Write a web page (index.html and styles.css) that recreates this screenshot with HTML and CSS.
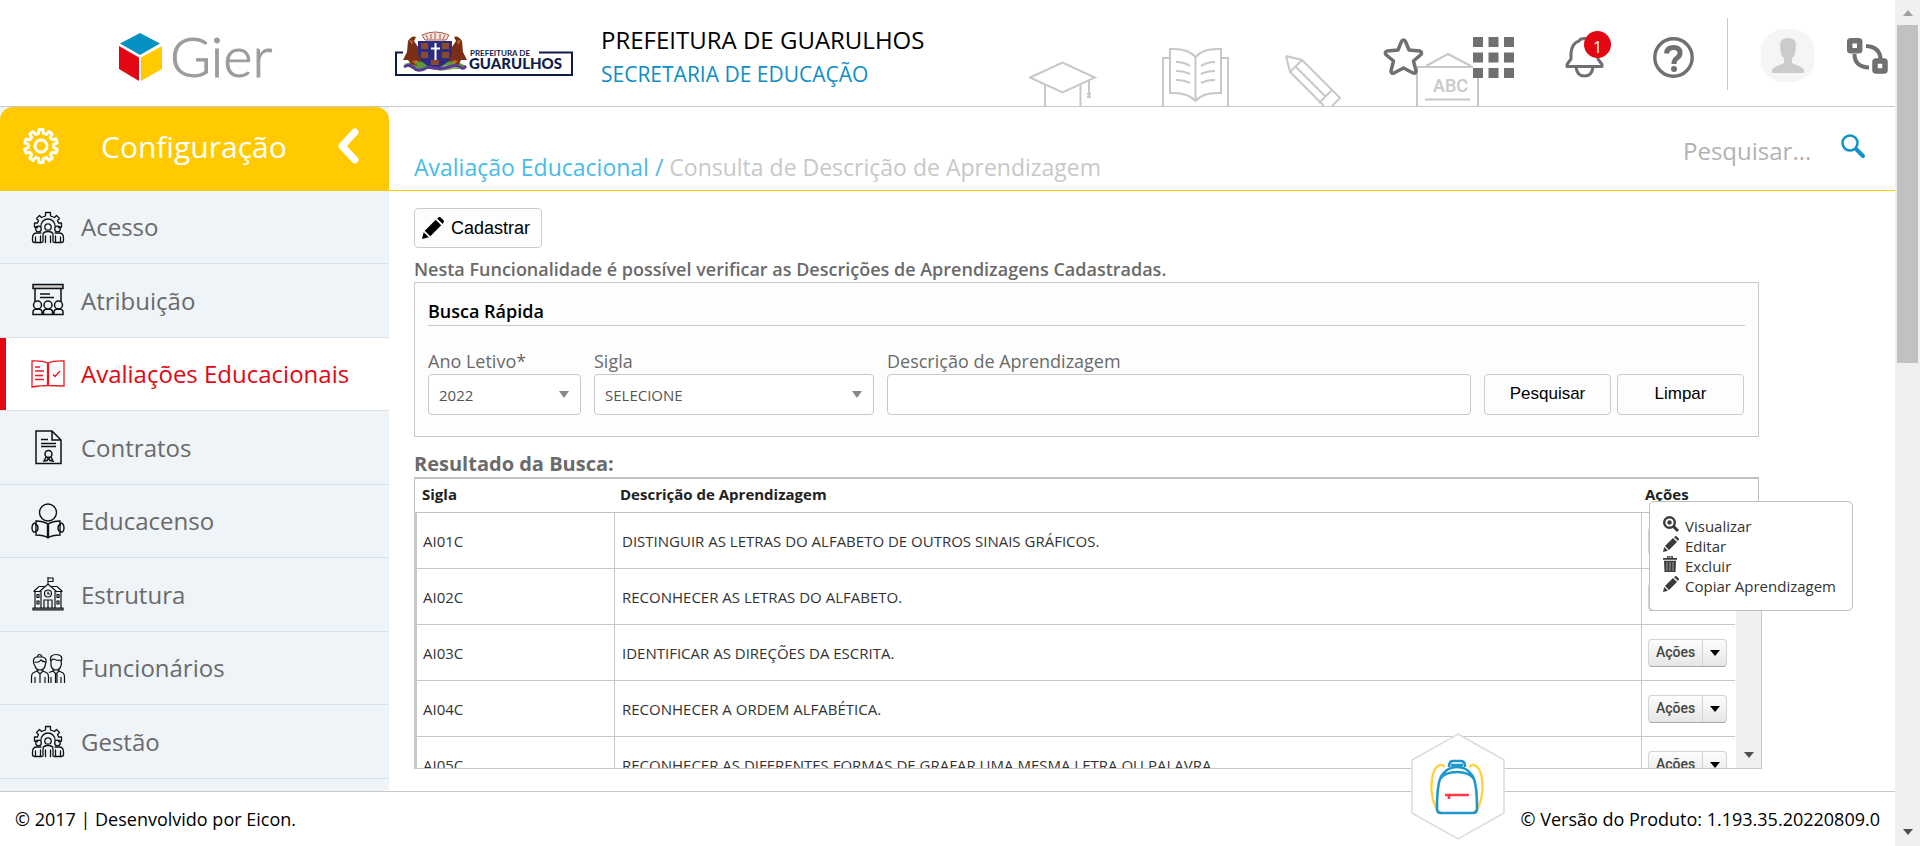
FILE: index.html
```html
<!DOCTYPE html>
<html lang="pt-BR">
<head>
<meta charset="utf-8">
<title>Gier - Consulta de Descrição de Aprendizagem</title>
<link rel="stylesheet" href="styles.css">
</head>
<body>
<svg class="defs" aria-hidden="true">
  <defs>
    <path id="tooth" d="M-3.9-11.9L-2.4-12.6-2-16.4H2L2.4-12.6 3.9-11.9"/>
    <g id="people" fill="none" stroke="currentColor" stroke-width="1.3" stroke-linejoin="round" stroke-linecap="round">
      <path d="M7.500 18.500L4.500 18V14H7.500L8.500 11.500 6.500 9.500 9.500 6.500 11.500 8.500 15.500 7V3.500H20.500V7L24.500 8.500 26.500 6.500 29.500 9.500 27.500 11.500 28.500 14H31.500V18L28.500 18.500"/>
      <path d="M11 17A7 7 0 0 1 25 17"/>
      <circle cx="18" cy="18" r="3.200"/><circle cx="8.500" cy="20" r="2.800"/><circle cx="27.500" cy="20" r="2.800"/>
      <path d="M13 33V26Q13 22.500 18 22.500T23 26V33M15.500 33.500V27M20.500 33.500V27"/>
      <path d="M11 24H7Q2.500 24 2.500 29V31.500Q2.500 33.500 5 33.500H12M5.500 33V28M10.500 33V27M25 24H29Q33.500 24 33.500 29V31.500Q33.500 33.500 31 33.500H24M30.500 33V28M25.500 33V27"/>
    </g>
    <g id="pencil"><path d="M0 16L1.200 11 5 14.800ZM2 10L10 2 14 6 6 14ZM11 1L12.200.2Q13-.3 13.800.5L15.500 2.200Q16.300 3 15.800 3.800L15 5Z"/></g>
  </defs>
</svg>
<div class="window">
  <div class="page">
    <header class="topbar">
      <svg class="scenery" viewBox="1029 46 451 60" fill="none" stroke="#c8c8c8" stroke-width="2" aria-hidden="true">
        <path d="M1030 77.500L1062.500 62.500 1095 77.500 1062.500 92.500ZM1045 85V106M1080.500 85V106M1089 80V98M1087 94H1091M1087 97H1091"/>
        <path d="M1170 58H1163V106M1221 58H1228V106M1170 49V93Q1188 92 1195.500 101 1203 92 1221 93V49Q1203 48 1195.500 57 1188 48 1170 49ZM1195.500 57V101"/>
        <path d="M1176 62Q1184 62 1190 66M1176 71Q1184 71 1190 74M1176 80Q1184 80 1190 83M1215 62Q1207 62 1201 66M1215 71Q1207 71 1201 74M1215 80Q1207 80 1201 83"/>
        <path d="M1286 56L1302 60 1340 98 1332 106M1286 56L1290 72 1324 106M1302 60L1290 72M1296 67L1325 96M1332 90L1319 103"/>
        <path d="M1417 67H1479M1426 66L1448 54 1471 66M1417 67V106M1478 67V106M1425 99.500H1470"/>
        <text class="scenery-text" x="1433" y="92" stroke="none" fill="#c8c8c8">ABC</text>
      </svg>
      <a class="brand" href="#" aria-label="Gier">
        <svg width="150" height="56" viewBox="119 29 150 56">
          <path fill="#0691c5" d="M140 33L160 43.500 140 55 120 43.500Z"/><path fill="#e30613" d="M119 46L139 57.500V81L119 69Z"/><path fill="#ffcb00" d="M162 46L141 57.500V81L162 69Z"/>
          <text class="brand-text" x="170" y="77">Gier</text>
        </svg>
      </a>
      <svg class="city" width="178" height="60" viewBox="395 27 178 60" role="img" aria-label="Prefeitura de Guarulhos">
        <path fill="none" stroke="#101c48" stroke-width="2" d="M403 52.500H396V75H572V52.500H539"/>
        <path fill="#5a9a3c" d="M404 64Q418 59 432 61 450 57 466 66L458 69H412Z"/>
        <path fill="#8fb56a" d="M425 66Q440 62 462 68L440 71Z"/>
        <path fill="#7a2e16" d="M408 41Q412 35 416 37L414 41 420 50 423 62 415 61 417 66 411 64 408 60 403 60 407 52ZM462 41Q458 35 454 37L456 41 450 50 447 62 455 61 453 66 459 64 461 60 467 60 463 52Z"/>
        <path fill="#c06a2a" d="M409 40L413 41 412 45ZM461 40L457 41 458 45ZM412 61L417 60 416 65ZM458 61L453 60 454 65Z"/>
        <path fill="#2d2c7e" d="M418 41H452V52Q451 64 435 69 419 64 418 52Z"/>
        <path fill="#8c4a2c" d="M421 43H428V49H421ZM442 43H449V49H442ZM421 52H428V58H421ZM442 52H449V58H442ZM431 60H439V65H431Z"/>
        <path stroke="#fff" stroke-width="2" d="M435.500 43V60M431 48.500H440"/>
        <path fill="#f5e4dc" stroke="#a9584a" d="M422 35Q435 29 449 35L446 40H425ZM426 35L428 39M431 34V39M435 33V39M440 34V39M445 35L443 39"/>
        <path fill="none" stroke="#5b3a94" stroke-width="3" d="M404 67Q410 63 414 68T428 67Q441 70 449 67T460 67 466 66"/>
        <text class="city-small" x="470" y="56">PREFEITURA DE</text>
        <text class="city-big" x="469" y="69">GUARULHOS</text>
      </svg>
      <div class="org">
        <div class="org-name">PREFEITURA DE GUARULHOS</div>
        <div class="org-dept">SECRETARIA DE EDUCAÇÃO</div>
      </div>
      <nav class="tools" aria-label="Atalhos">
        <button class="tool" aria-label="Favoritos"><svg viewBox="0 0 41 41"><path fill="#fff" stroke="#707070" stroke-width="3.500" stroke-linejoin="round" d="M20.500 3Q22 3 22.500 4.500L26 13 37 14Q39.500 15 38 17.500L30.500 24 33 34Q32.500 37 30 36L20.500 31 11 36Q8 37 8 34L10.500 24 2.800 17.500Q1.500 15 4 14L15 13 18.500 4.500Q19 3 20.500 3Z"/></svg></button>
        <button class="tool" aria-label="Aplicativos"><svg viewBox="0 0 41 41"><path fill="#fff" d="M0 0H41V41H0Z"/><path fill="#707070" d="M0 0H10V10H0ZM15.500 0H25.500V10H15.500ZM31 0H41V10H31ZM0 15.500H10V25.500H0ZM15.500 15.500H25.500V25.500H15.500ZM31 15.500H41V25.500H31ZM0 31H10V41H0ZM15.500 31H25.500V41H15.500ZM31 31H41V41H31Z"/></svg></button>
        <button class="tool" aria-label="Notificações, 1 nova"><svg viewBox="0 0 41 41" fill="none" stroke="#707070" stroke-width="3" stroke-linejoin="round"><path d="M4 29.500V27.500L8 22V16Q9 6 16 4 17 1.500 21.500 1.500T27 4Q34 6 35 16V22L39 27.500V29.500Z"/><path d="M13 30Q14 39 21.500 39T30 30"/></svg><span class="badge">1</span></button>
        <button class="tool" aria-label="Ajuda"><svg viewBox="0 0 41 41" fill="none" stroke="#707070"><circle cx="20.500" cy="20.500" r="18.700" stroke-width="3.400"/><path stroke-width="5" d="M13.500 16.500Q14 10.500 20.500 10.500T27 16Q27 19 24 21T21 27"/><circle cx="21" cy="32" r="3" fill="#707070" stroke="none"/></svg></button>
        <div class="account">
          <span class="rule"></span>
          <button class="avatar" aria-label="Perfil"><svg viewBox="0 0 53 53"><path fill="#f5f5f5" d="M18 0H35Q53 8 53 18V35Q53 45 35 53H18Q0 45 0 35V18Q0 8 18 0Z"/><path fill="#cbcbcb" d="M19 16Q19 9 27 9T35 16L34.500 22Q34 27 31 29V34L41 38.500Q43 40 43 44H11Q11 40 13 38.500L23 34V29Q20 27 19.500 22Z"/></svg></button>
          <button class="tool" aria-label="Trocar perfil"><svg viewBox="0 0 41 41" fill="none" stroke="#707070" stroke-width="5.500"><rect x="2.700" y="3.700" width="10" height="10" rx="1"/><rect x="28" y="24" width="10" height="10" rx="1"/><path stroke-width="4" d="M7.500 17Q7.500 30 22 30.500M19 9Q33 10 33.500 22"/></svg></button>
        </div>
      </nav>
    </header>

    <div class="middle">
      <aside class="sidebar">
        <button class="module">
          <svg width="36" height="36" viewBox="-18 -18 36 36" fill="none" stroke="#fff" stroke-width="3" stroke-linejoin="round"><circle r="6"/><use href="#tooth"/><use href="#tooth" transform="rotate(36)"/><use href="#tooth" transform="rotate(72)"/><use href="#tooth" transform="rotate(108)"/><use href="#tooth" transform="rotate(144)"/><use href="#tooth" transform="rotate(180)"/><use href="#tooth" transform="rotate(216)"/><use href="#tooth" transform="rotate(252)"/><use href="#tooth" transform="rotate(288)"/><use href="#tooth" transform="rotate(324)"/></svg>
          <span class="module-name">Configuração</span>
          <svg width="24" height="38" viewBox="0 0 24 38" fill="none" stroke="#fff" stroke-width="7" stroke-linecap="round" stroke-linejoin="round"><path d="M19 5L6 19 19 33"/></svg>
        </button>
        <nav class="menu" aria-label="Configuração">
          <a class="item" href="#"><svg viewBox="0 0 36 36"><use href="#people"/></svg>Acesso</a>
          <a class="item" href="#"><svg viewBox="0 0 36 36" fill="none" stroke="currentColor" stroke-width="1.500"><path fill="#ccc" d="M3 2.500H33V6.500H3Z"/><path d="M5 7V20M31 7V20M10 12H20M10 15.500H24"/><circle cx="7.500" cy="23" r="4"/><circle cx="18" cy="23" r="4"/><circle cx="28.500" cy="23" r="4"/><path d="M3 32.500V30Q3 27 7.500 27T12 30V32.500ZM13.500 32.500V30Q13.500 27 18 27T22.500 30V32.500ZM24 32.500V30Q24 27 28.500 27T33 30V32.500Z"/></svg>Atribuição</a>
          <a class="item active" href="#" aria-current="page"><svg viewBox="0 0 36 36" fill="none" stroke="currentColor" stroke-width="1.300"><path d="M18 7Q12 4.500 2 5V31Q12 29.500 18 29.500 24 29.500 34 30V5Q24 4.500 18 7ZM17.500 7V29.500M18.500 7V29.500M5 11H10M5 15H14M5 19.500H13M5 23.500H14M23 18.500L25 20.500 30 15"/></svg>Avaliações Educacionais</a>
          <a class="item" href="#"><svg viewBox="0 0 36 36" fill="none" stroke="currentColor" stroke-width="1.500"><path d="M6 2H22L31 11V34.500H6ZM22 2V11H31M11 10.500H18M11 14.500H26M11 17.500H26"/><circle cx="18.500" cy="25" r="3.500"/><path d="M16 28L14 32 17 31.500 18.500 29 20 31.500 23 32 21 28"/></svg>Contratos</a>
          <a class="item" href="#"><svg viewBox="0 0 36 36" fill="none" stroke="currentColor" stroke-width="1.400"><circle cx="18" cy="9.500" r="8.500"/><path d="M18 21Q13 18 6 18V32Q14 32 18 35 22 32 30 32V18Q23 18 18 21ZM17.500 21V34M18.500 21V34M6 20Q2 20 2 25T6 29M30 20Q34 20 34 25T30 29"/><path d="M5 21.500Q8 21.500 8 25T5 28.500M31 21.500Q28 21.500 28 25T31 28.500"/></svg>Educacenso</a>
          <a class="item" href="#"><svg viewBox="0 0 36 36" fill="none" stroke="currentColor" stroke-width="1.200"><path fill="#777" d="M3 32H33V34H3Z"/><path d="M18 1V8M18 2H23V5.500H18M4 15L9 10.500H15M32 15L27 10.500H21M3.500 15.500H9M27 15.500H32.500M5 16V32M31 16V32M9 16L18 8 27 16M11 15V32M25 15V32M14 32V24H22V32M18 24V32M7 18.500H9V21.500H7ZM27 18.500H29V21.500H27ZM7 25H9V28H7ZM27 25H29V28H27Z"/><circle cx="18" cy="17.500" r="3.500"/><path d="M18 15.500V18H20"/></svg>Estrutura</a>
          <a class="item" href="#"><svg viewBox="0 0 36 36" fill="none" stroke="currentColor" stroke-width="1.200"><path d="M6.500 7C1.500 8 4 15 5 16Q6 20 10 20T15 16C16 12 18 8 12 7ZM4.500 12Q9 13 11 10 13 12 15.500 12M7.500 7Q7.500 4.500 9.500 4.500T12 7M7 19V21L3 23Q1.500 24 1.500 27V33M13 19V21L17 23Q18.500 24 18.500 27V33M7 21L10 24 13 21M10 24V33M5 27V33M15 27V33"/><path d="M21 12C19 6 23 4.500 26 4.500 31 4.500 33 7 31 12Q32 14 31 15.500 30 20 26 20T21 15.500ZM21 11Q23 8 25 9.500 28 11 31 10M23 19V21L19 22.500M29 19V21L33 23Q34.500 24 34.500 27V33M23 21L26 24 29 21M25.500 24V33M27 24V33M21 27V33M31 27V33"/></svg>Funcionários</a>
          <a class="item" href="#"><svg viewBox="0 0 36 36"><use href="#people"/></svg>Gestão</a>
        </nav>
      </aside>

      <main class="main">
        <div class="pagebar">
          <h1 class="crumbs"><a href="#">Avaliação Educacional /</a> Consulta de Descrição de Aprendizagem</h1>
          <form class="search">
            <input type="search" aria-label="Pesquisar" placeholder="Pesquisar...">
            <button aria-label="Buscar"><svg width="24" height="24" viewBox="0 0 24 24" fill="none" stroke="#0d93c7"><circle cx="9" cy="9" r="7.500" stroke-width="2.500"/><path stroke-width="4" stroke-linecap="round" d="M15.500 15.500L22 22"/></svg></button>
          </form>
        </div>
        <div class="content">
          <button class="btn create"><svg width="22" height="22" viewBox="0 0 16 16"><use href="#pencil"/></svg>Cadastrar</button>
          <p class="hint">Nesta Funcionalidade é possível verificar as Descrições de Aprendizagens Cadastradas.</p>
          <form class="panel">
            <h2 class="panel-title">Busca Rápida</h2>
            <div class="fields">
              <div class="field"><label for="ano">Ano Letivo*</label><span class="select"><select id="ano"><option>2022</option></select></span></div>
              <div class="field"><label for="sigla">Sigla</label><span class="select"><select id="sigla"><option>SELECIONE</option></select></span></div>
              <div class="field"><label for="descricao">Descrição de Aprendizagem</label><input id="descricao" type="text"></div>
              <div class="actions"><button class="btn" type="button">Pesquisar</button><button class="btn" type="reset">Limpar</button></div>
            </div>
          </form>
          <h2 class="results-title">Resultado da Busca:</h2>
          <section class="results">
            <table class="grid-head">
              <thead><tr><th class="col-code">Sigla</th><th>Descrição de Aprendizagem</th><th class="col-act">Ações</th></tr></thead>
            </table>
            <div class="grid-body">
              <div class="rows">
                <table class="grid">
                  <tbody>
                    <tr><td class="col-code">AI01C</td><td>DISTINGUIR AS LETRAS DO ALFABETO DE OUTROS SINAIS GRÁFICOS.</td><td class="col-act"><button class="split"><span>Ações</span><i></i></button></td></tr>
                    <tr><td class="col-code">AI02C</td><td>RECONHECER AS LETRAS DO ALFABETO.</td><td class="col-act"><button class="split"><span>Ações</span><i></i></button></td></tr>
                    <tr><td class="col-code">AI03C</td><td>IDENTIFICAR AS DIREÇÕES DA ESCRITA.</td><td class="col-act"><button class="split"><span>Ações</span><i></i></button></td></tr>
                    <tr><td class="col-code">AI04C</td><td>RECONHECER A ORDEM ALFABÉTICA.</td><td class="col-act"><button class="split"><span>Ações</span><i></i></button></td></tr>
                    <tr><td class="col-code">AI05C</td><td>RECONHECER AS DIFERENTES FORMAS DE GRAFAR UMA MESMA LETRA OU PALAVRA.</td><td class="col-act"><button class="split"><span>Ações</span><i></i></button></td></tr>
                  </tbody>
                </table>
              </div>
              <div class="track"><i class="arrow-down"></i></div>
            </div>
            <ul class="popup">
              <li><a href="#"><svg viewBox="0 0 16 16" fill="none" stroke="#3a3a3a"><circle cx="6.500" cy="6.500" r="5.300" stroke-width="2.400"/><circle cx="6.500" cy="6.500" r="2.200" fill="#3a3a3a" stroke="none"/><path stroke-width="3" d="M10.500 10.500L15 15"/></svg>Visualizar</a></li>
              <li><a href="#"><svg viewBox="0 0 16 16" fill="#3a3a3a"><use href="#pencil"/></svg>Editar</a></li>
              <li><a href="#"><svg viewBox="0 0 16 16" fill="#3a3a3a"><path d="M0 2H4V.2H10V2H14V3.800H0ZM5.200 1.400V2H8.800V1.400ZM1 4.800H13L12.500 16H1.500Z"/><path stroke="#bbb" stroke-width=".8" d="M4 6V15M7 6V15M10 6V15"/></svg>Excluir</a></li>
              <li><a href="#"><svg viewBox="0 0 16 16" fill="#3a3a3a"><use href="#pencil"/></svg>Copiar Aprendizagem</a></li>
            </ul>
          </section>
        </div>
      </main>
    </div>

    <footer class="footer">
      <span>© 2017 | Desenvolvido por Eicon.</span>
      <span>© Versão do Produto: 1.193.35.20220809.0</span>
      <button class="backpack" aria-label="Mochila">
        <svg width="94" height="107" viewBox="0 0 94 107" fill="none">
          <path fill="#fff" stroke="#dcdcdc" stroke-width="1.500" d="M47 1L93 27V80L47 106 1 80V27Z"/>
          <g stroke="#ffd23e" stroke-width="2.400"><path d="M34 34Q29 29 24 36 20 44 20.500 57 22 75 30 80M58 34Q63 29 68 36 72 44 71.500 57 70 75 62 80"/></g>
          <g stroke="#1f97cc" stroke-width="2.600"><path d="M26 76Q26 46 32 41 37 34 46 34T60 41Q66 46 66 76 66 80 62 80H30Q26 80 26 76ZM38 34Q38 28 42 28H50Q54 28 54 34M40 32H52M29 46Q34 39 46 39T63 46"/></g>
          <path stroke="#ff3b47" stroke-width="2.600" d="M34 62H58M38 62V66"/>
        </svg>
      </button>
    </footer>
  </div>
  <div class="scrollbar" aria-hidden="true"><i class="arrow-up"></i><span class="thumb"></span><i class="arrow-down"></i></div>
</div>
</body>
</html>
```
FILE: styles.css
```css
* { box-sizing: border-box; }
body { margin: 0; font-family: "Open Sans", "Noto Sans", sans-serif; color: #333; background: #fff; }
a { color: inherit; text-decoration: none; }
button, input, select { font: inherit; color: inherit; }
button { padding: 0; border: 0; background: none; cursor: pointer; }
svg { display: block; flex: none; overflow: visible; }
h1, h2, p, ul { margin: 0; padding: 0; font-weight: 400; }
.defs { position: absolute; width: 0; height: 0; }

.window { display: flex; height: 100vh; }
.page { flex: 1; min-width: 0; display: flex; flex-direction: column; }

/* window scrollbar */
.scrollbar { width: 25px; padding: 10px 2px 11px; background: #f0f0f0; display: flex; flex-direction: column; align-items: center; }
.thumb { width: 21px; height: 41%; margin: 9px 0 auto; background: #c1c1c1; }
.arrow-up, .arrow-down { border: 5px solid transparent; }
.arrow-up { border-top: 0; border-bottom: 6px solid #a0a0a0; }
.arrow-down { border-bottom: 0; border-top: 6px solid #505050; }

/* top bar */
.topbar { position: relative; flex: none; display: flex; align-items: center; height: 107px; padding: 8px 7px 0 119px; border-bottom: 1px solid #c8c8c8; }
.scenery { position: absolute; right: 415px; bottom: 0; width: 451px; height: 60px; overflow: hidden; }
.scenery-text { font: 500 18px Roboto, sans-serif; }
.brand-text { font: 300 56px Lato, sans-serif; fill: #9c9c9c; stroke: #9c9c9c; }
.city { margin: 0 28px 0 126px; }
.city-small { font: 700 8px Lato, sans-serif; fill: #101c48; }
.city-big { font: 900 15px Lato, sans-serif; fill: #101c48; }
.org { line-height: 34px; white-space: nowrap; }
.org-name { font-size: 24px; color: #000; }
.org-dept { font-size: 21px; color: #0d8ec4; }
.tools { position: relative; margin-left: auto; display: flex; align-items: center; gap: 49px; }
.tool { position: relative; width: 41px; height: 41px; }
.badge { position: absolute; top: -6px; right: -7px; width: 27px; height: 27px; border-radius: 50%; background: #e30613; color: #fff; font-size: 16px; line-height: 32px; }
.account { display: flex; align-items: center; gap: 33px; margin-left: -16px; }
.rule { width: 1px; height: 72px; margin-bottom: 6px; background: #c8c8c8; }
.avatar { width: 53px; height: 53px; margin-bottom: 4px; }

/* sidebar */
.middle { flex: 1; min-height: 0; display: flex; }
.sidebar { flex: none; width: 389px; background: #eff4f9; overflow: hidden; }
.module { display: flex; align-items: center; width: 100%; height: 84px; padding: 0 29px 6px 23px; border-radius: 13px 13px 0 0; background: #ffcb00; color: #fff; }
.module-name { flex: 1; padding-left: 42px; font-size: 30px; text-align: left; }
.menu { display: grid; grid-auto-rows: 73px 74px; }
.item { display: flex; align-items: center; gap: 15px; padding: 0 0 1px 30px; border-bottom: 1px solid #d8e0e8; font-size: 24px; color: #6a6a6a; }
.item svg { width: 36px; height: 36px; color: #111; }
.item.active { background: #fff; box-shadow: inset 6px 0 #e30613; color: #e30613; }
.item.active svg { color: #f11620; }

/* page heading */
.main { flex: 1; min-width: 0; display: flex; flex-direction: column; }
.pagebar { flex: none; display: flex; align-items: flex-end; justify-content: space-between; height: 84px; padding: 0 30px 7px 25px; border-bottom: 1px solid #ffcb00; }
.crumbs { font-size: 23px; line-height: 32px; color: #c8c8c8; }
.crumbs a { color: #47bce8; }
.search { display: flex; align-items: flex-start; margin-bottom: 17px; }
.search input { width: 158px; height: 32px; padding: 0; border: 0; outline: 0; background: none; font-size: 24px; }
.search input::placeholder { color: #b2b2b2; }

/* content */
.content { flex: 1; min-height: 0; display: flex; flex-direction: column; padding: 17px 136px 22px 25px; }
.btn { height: 41px; border: 1px solid #ccc; border-radius: 4px; background: #fdfdfd; color: #000; font: 17px "Liberation Sans", Arial, sans-serif; }
.create { align-self: flex-start; display: flex; align-items: center; gap: 7px; height: 40px; padding: 0 11px 0 7px; font-size: 18px; }
.hint { margin-top: 8px; font-size: 18px; font-weight: 600; line-height: 26px; color: #6a6a6a; }
.panel { padding: 14px 13px 21px; border: 1px solid #c8c8c8; background: #fdfdfd; }
.panel-title { border-bottom: 1px solid #c8c8c8; font-size: 18px; font-weight: 600; line-height: 28px; color: #000; }
.fields { display: grid; grid-template-columns: 153px 280px 1fr auto; gap: 13px; align-items: end; margin-top: 22px; padding-right: 1px; }
.field { display: grid; }
.field label { font-size: 18px; line-height: 26px; color: #6a6a6a; }
.field select, .field input { width: 100%; height: 41px; padding: 0 10px; border: 1px solid #c8c8c8; border-radius: 4px; background: #fff; font-size: 15px; color: #555; appearance: none; }
.select { position: relative; display: block; }
.select::after { content: ""; position: absolute; right: 12px; top: 17px; border: 5px solid transparent; border-top: 7px solid #888; border-bottom: 0; pointer-events: none; }
.actions { display: flex; gap: 6px; }
.actions .btn { width: 127px; padding-bottom: 2px; }

/* results */
.results-title { margin-top: 14px; font-size: 20px; font-weight: 700; line-height: 26px; color: #6a6a6a; }
.results { position: relative; flex: 1; min-height: 0; display: flex; flex-direction: column; }
table { width: 100%; border-collapse: separate; border-spacing: 0; table-layout: fixed; text-align: left; }
.grid-head { border: 1px solid #c0c0c0; border-top-width: 2px; font-size: 15px; color: #222; }
.grid-head th { height: 33px; padding: 0 7px 3px; font-weight: 700; }
.grid-head .col-code { width: 198px; }
.grid-head .col-act { width: 120px; }
.grid-body { flex: 1; min-height: 0; display: flex; margin-right: -3px; border: solid #c8c8c8; border-width: 0 1px 1px 3px; }
.rows { flex: 1; overflow: hidden; }
.track { width: 26px; display: flex; align-items: flex-end; justify-content: center; padding-bottom: 10px; background: #f0f0f0; border-left: 1px solid #fff; }
.grid td { height: 56px; padding: 0 7px; border-right: 1px solid #c8c8c8; border-bottom: 1px solid #c8c8c8; font-size: 15px; color: #333; }
.grid .col-code { width: 198px; padding-left: 6px; }
.grid .col-act { width: 93px; padding-left: 6px; border-right: 0; }
.split { display: flex; align-items: center; width: 79px; height: 28px; border: 1px solid #d4d4d4; border-bottom-color: #aaa; border-radius: 4px; background: linear-gradient(#fdfdfd, #e6e6e6); font: 500 14px Roboto, sans-serif; color: #444; }
.split span { flex: 1; padding-bottom: 2px; }
.split i { display: flex; align-items: center; justify-content: center; width: 24px; height: 100%; border-left: 1px solid #d4d4d4; }
.split i::after { content: ""; border: 5px solid transparent; border-top: 6px solid #000; border-bottom: 0; }
.popup { position: absolute; top: 24px; right: -94px; width: 204px; padding: 14px 13px; border: 1px solid #c0c0c0; border-radius: 5px; background: #fff; list-style: none; font-size: 15px; line-height: 20px; color: #333; }
.popup a { display: flex; gap: 6px; white-space: nowrap; }
.popup svg { width: 16px; height: 16px; }

/* footer */
.footer { position: relative; flex: none; display: flex; align-items: center; justify-content: space-between; height: 55px; padding: 0 15px; border-top: 1px solid #c8c8c8; font-size: 18px; color: #000; }
.backpack { position: absolute; right: 390px; bottom: 6px; }
```
